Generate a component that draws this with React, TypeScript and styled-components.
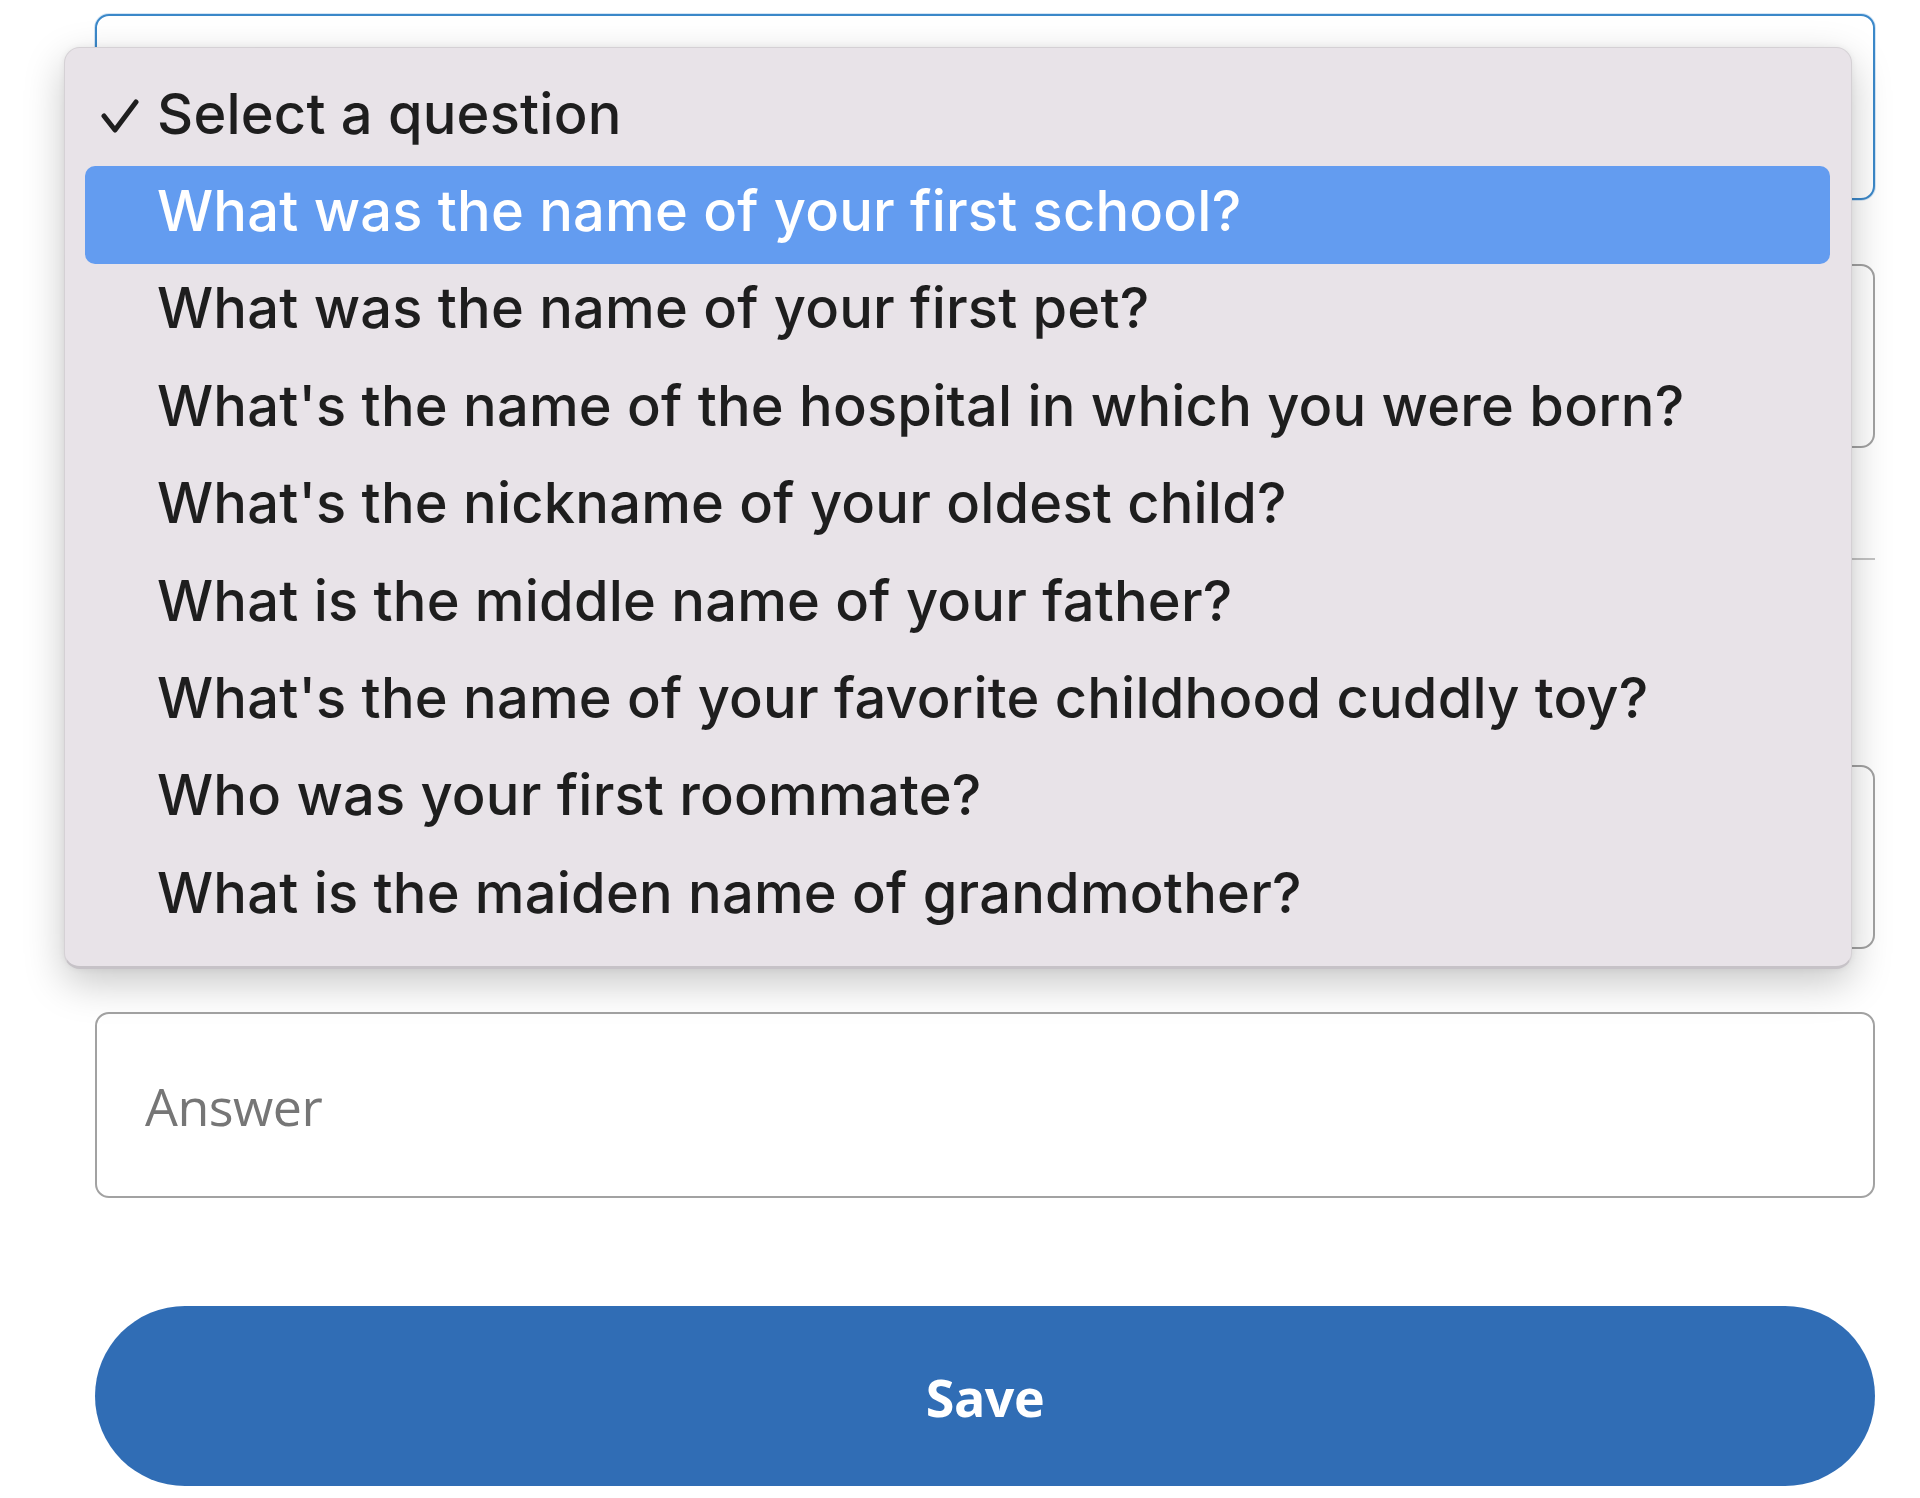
import React from "react";
import styled, { createGlobalStyle } from "styled-components";

const Global = createGlobalStyle`
  html, body { margin: 0; padding: 0; background: #ffffff; }
  body { width: 1920px; height: 1498px; overflow: hidden; font-family: "Open Sans", "Liberation Sans", sans-serif; }
`;

const Page = styled.div`
  width: 1920px;
  height: 1498px;
  box-sizing: border-box;
  padding: 14px 45px 0 95px;
  background: #ffffff;
`;

const Form = styled.form`
  display: flex;
  flex-direction: column;
  width: 1780px;
`;

const SelectWrap = styled.div`
  position: relative;
`;

const Field = styled.div<{ $focused?: boolean; $gap?: number; $h?: number }>`
  box-sizing: border-box;
  height: ${(p) => p.$h ?? 186}px;
  margin-top: ${(p) => p.$gap ?? 0}px;
  border: ${(p) => (p.$focused ? "2.5px solid #3b88c9" : "2.5px solid #a2a2a2")};
  border-radius: 14px;
  background: #ffffff;
  display: flex;
  align-items: center;
  padding-left: 48px;
  box-shadow: ${(p) => (p.$focused ? "0 0 0 1px rgba(80,150,220,0.25)" : "none")};
`;

const Placeholder = styled.span`
  font-family: "Open Sans", sans-serif;
  font-size: 52px;
  color: #767676;
  letter-spacing: -0.5px;
`;

const Divider = styled.hr<{ $gap: number }>`
  margin: ${(p) => p.$gap}px 0 0 0;
  border: none;
  border-top: 2px solid #c4c4c4;
  height: 0;
`;

const SaveButton = styled.button`
  margin-top: 108px;
  height: 180px;
  border: none;
  border-radius: 90px;
  background: #306db5;
  color: #ffffff;
  font-family: "Open Sans", sans-serif;
  font-weight: 700;
  font-size: 52px;
  letter-spacing: -0.5px;
  cursor: pointer;
`;

const Menu = styled.ul`
  position: absolute;
  left: -31px;
  top: 33px;
  width: 1788px;
  box-sizing: border-box;
  margin: 0;
  list-style: none;
  padding: 21px 21px 20px 20px;
  background: #e8e3e8;
  border: 1px solid rgba(0, 0, 0, 0.08);
  border-bottom: 3px solid #c6c2c7;
  border-radius: 16px;
  box-shadow: 0 14px 40px rgba(0, 0, 0, 0.22), 0 0 6px rgba(0, 0, 0, 0.06);
  z-index: 10;
`;

const Option = styled.li<{ $active?: boolean }>`
  height: 97.4px;
  display: flex;
  align-items: center;
  box-sizing: border-box;
  padding-bottom: 8px;
  border-radius: 10px;
  background: ${(p) => (p.$active ? "#639cf0" : "transparent")};
  color: ${(p) => (p.$active ? "#ffffff" : "#1e1e1e")};
  font-family: "Inter", "Liberation Sans", sans-serif;
  font-size: 56px;
  font-weight: 500;
  letter-spacing: 0.2px;
  white-space: nowrap;
`;

const CheckSlot = styled.span`
  width: 72px;
  flex: none;
  display: flex;
  align-items: center;
  padding-left: 16px;
  box-sizing: border-box;
  padding-top: 4px;
`;

const questions = [
  "What was the name of your first school?",
  "What was the name of your first pet?",
  "What's the name of the hospital in which you were born?",
  "What's the nickname of your oldest child?",
  "What is the middle name of your father?",
  "What's the name of your favorite childhood cuddly toy?",
  "Who was your first roommate?",
  "What is the maiden name of grandmother?",
];

const Check = () => (
  <svg width="38" height="36" viewBox="0 0 38 36">
    <polyline
      points="3,18 14,32 35,4"
      fill="none"
      stroke="#1e1e1e"
      strokeWidth="5"
      strokeLinecap="round"
      strokeLinejoin="round"
    />
  </svg>
);

export default function App() {
  return (
    <>
      <Global />
      <Page>
        <Form onSubmit={(e) => e.preventDefault()}>
          <SelectWrap>
            <Field $focused />
            <Menu role="listbox">
              <Option>
                <CheckSlot>
                  <Check />
                </CheckSlot>
                Select a question
              </Option>
              {questions.map((q, i) => (
                <Option key={q} $active={i === 0}>
                  <CheckSlot />
                  {q}
                </Option>
              ))}
            </Menu>
          </SelectWrap>
          <Field $gap={64} $h={184} />
          <Divider $gap={110} />
          <Field $gap={205} $h={184} />
          <Field $gap={63}>
            <Placeholder>Answer</Placeholder>
          </Field>
          <SaveButton type="submit">Save</SaveButton>
        </Form>
      </Page>
    </>
  );
}
